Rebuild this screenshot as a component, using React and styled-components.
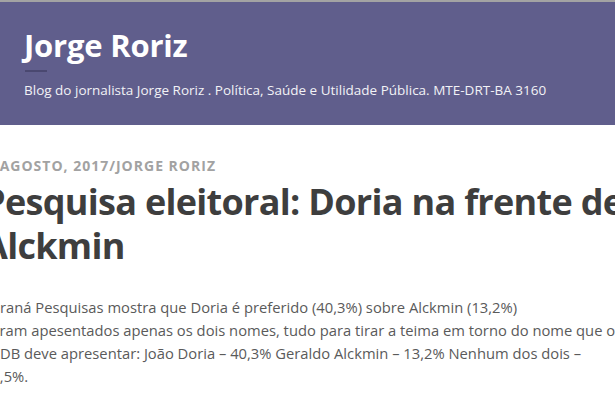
import React from "react";
import styled, { createGlobalStyle } from "styled-components";

const GlobalStyle = createGlobalStyle`
  html, body {
    margin: 0;
    padding: 0;
    background: #ffffff;
    overflow: hidden;
  }
  body {
    font-family: "Open Sans", "Noto Sans", sans-serif;
  }
`;

const Page = styled.div`
  width: 615px;
  height: 410px;
  overflow: hidden;
  border-top: 2px solid #a3a3a3;
  box-sizing: border-box;
`;

const Masthead = styled.header`
  background: #605e8c;
  padding: 24px 24px 25px;
  display: flex;
  flex-direction: column;
  align-items: flex-start;
`;

const SiteTitle = styled.h1`
  margin: 0;
  font-family: "Open Sans", "Noto Sans", sans-serif;
  font-weight: 700;
  font-size: 31px;
  line-height: 38px;
  letter-spacing: -0.2px;
  color: #ffffff;
`;

const TitleRule = styled.span`
  display: block;
  width: 22px;
  height: 2px;
  margin: 6px 0 0 1px;
  background: #4a4870;
`;

const Tagline = styled.p`
  margin: 8px 0 0;
  font-size: 13.5px;
  line-height: 20px;
  color: #f2f2f6;
`;

const Article = styled.article`
  margin-left: -17px;
  width: 660px;
  padding-top: 32px;
`;

const PostMeta = styled.div`
  font-family: "Open Sans", "Noto Sans", sans-serif;
  font-weight: 700;
  font-size: 14px;
  letter-spacing: 1px;
  text-indent: -6px;
  text-transform: uppercase;
  color: #a2a2a2;
  line-height: 18px;
`;

const PostTitle = styled.h2`
  margin: 5px 0 0;
  font-family: "Open Sans", "Noto Sans", sans-serif;
  font-weight: 700;
  font-size: 36px;
  line-height: 44px;
  letter-spacing: -0.7px;
  color: #3e3e3e;
  white-space: nowrap;
`;

const PostBody = styled.p`
  margin: 28px 0 0;
  font-size: 14.75px;
  line-height: 23px;
  color: #5a5a5a;
  white-space: nowrap;
`;

export default function App() {
  return (
    <>
      <GlobalStyle />
      <Page>
        <Masthead>
          <SiteTitle>Jorge Roriz</SiteTitle>
          <TitleRule />
          <Tagline>
            Blog do jornalista Jorge Roriz . Política, Saúde e Utilidade Pública. MTE-DRT-BA 3160
          </Tagline>
        </Masthead>
        <Article>
          <PostMeta>29 agosto, 2017/Jorge Roriz</PostMeta>
          <PostTitle>
            Pesquisa eleitoral: Doria na frente de
            <br />
            Alckmin
          </PostTitle>
          <PostBody>
            Paraná Pesquisas mostra que Doria é preferido (40,3%) sobre Alckmin (13,2%)
            <br />
            Foram apesentados apenas os dois nomes, tudo para tirar a teima em torno do nome que o
            <br />
            PSDB deve apresentar: João Doria – 40,3% Geraldo Alckmin – 13,2% Nenhum dos dois –
            <br />
            45,5%.
          </PostBody>
        </Article>
      </Page>
    </>
  );
}
